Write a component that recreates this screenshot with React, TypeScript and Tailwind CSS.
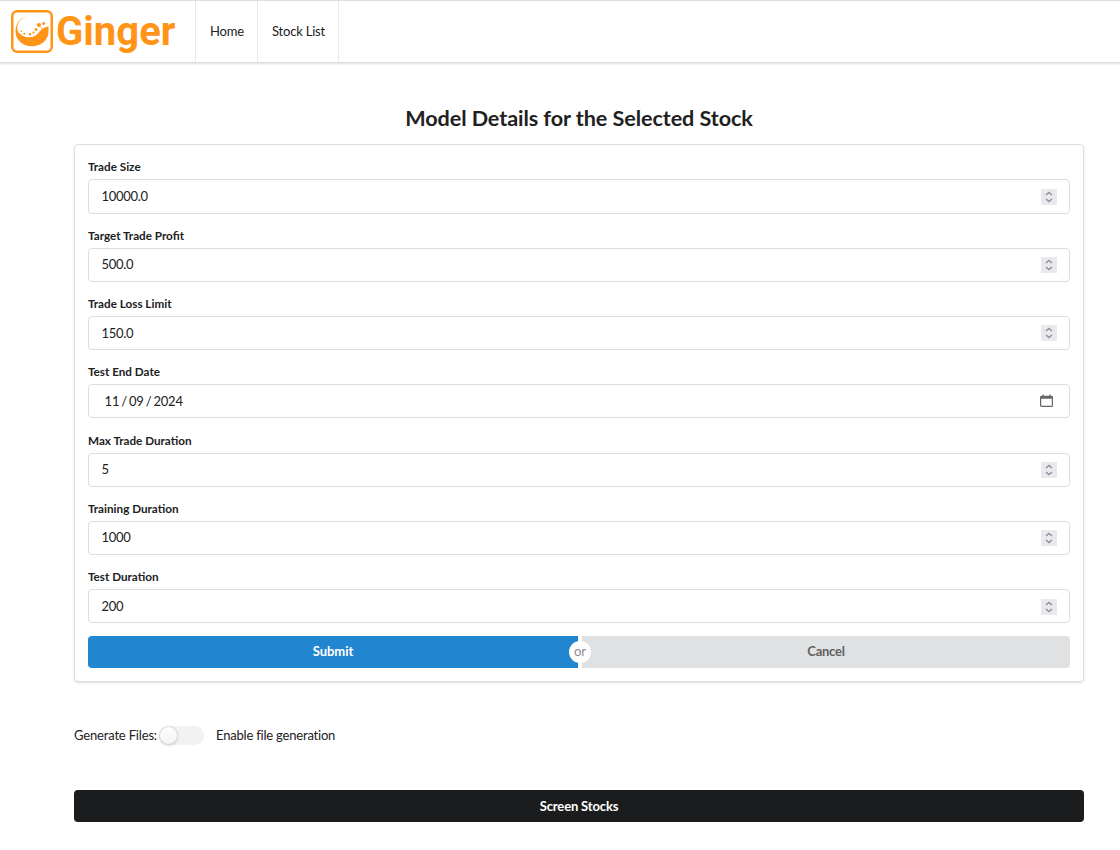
import React from 'react';

function Logo() {
  return (
    <div className="flex h-full w-[195px] items-center pl-[11px]">
      <svg width="42" height="43" viewBox="0 0 42 43" className="shrink-0">
        <rect x="1.25" y="1.25" width="39.5" height="40.5" rx="5" fill="none" stroke="#ff9416" strokeWidth="2.5" />
        <path d="M15.5 6C8.5 8 4.5 14.5 4.5 21C4.5 30 11.5 36.3 21 36.3C30.5 36.3 37.5 29.5 37.5 21.5V16.6C33 17 30.3 19.8 27.3 23C24.3 26.2 21.5 27.6 17.5 27.3C10.5 26.7 6 22.5 6.2 17.5C6.6 12.5 10 8.3 15.5 6Z" fill="#ff9416" />
        <g fill="#ff9416">
          <circle cx="10.3" cy="21.3" r="0.8" />
          <circle cx="13.4" cy="23.8" r="1" />
          <circle cx="19" cy="24.2" r="1.2" />
          <circle cx="22.5" cy="22.6" r="1.1" />
          <circle cx="25" cy="19.5" r="1.4" />
          <circle cx="28" cy="15" r="2.1" />
          <circle cx="32.6" cy="13.4" r="1.5" />
          <circle cx="30.6" cy="18" r="0.8" />
        </g>
      </svg>
      <span className="ml-[3px] font-[Roboto,sans-serif] text-[40px] leading-none font-bold text-[#ff9416]">Ginger</span>
    </div>
  );
}

function Spinner() {
  return (
    <span className="mt-[0.5px] flex h-4 w-4 items-center justify-center bg-[#e9e9ed]">
      <svg width="16" height="16" viewBox="0 0 16 16" fill="none" stroke="#8f8f9d" strokeWidth="1.5">
        <path d="M5 6L8 3.5L11 6M5 10L8 12.5L11 10" />
      </svg>
    </span>
  );
}

function CalendarIcon() {
  return (
    <svg width="14" height="14" viewBox="0 0 14 14" className="mr-[3px] mb-px">
      <rect x="0.6" y="2.4" width="11.8" height="10" rx="1" fill="none" stroke="#666" strokeWidth="1.2" />
      <path d="M0.5 2h12v2.7h-12zM2.5 0.5h1.3v2H2.5zM9.3 0.5h1.3v2H9.3z" fill="#666" />
    </svg>
  );
}

const fields = [
  { label: 'Trade Size', value: '10000.0' },
  { label: 'Target Trade Profit', value: '500.0' },
  { label: 'Trade Loss Limit', value: '150.0' },
  { label: 'Test End Date', value: '11 / 09 / 2024', date: true },
  { label: 'Max Trade Duration', value: '5' },
  { label: 'Training Duration', value: '1000' },
  { label: 'Test Duration', value: '200' },
];

export default function App() {
  return (
    <div className="h-[850px] w-[1120px] overflow-hidden bg-white font-[Lato,sans-serif] text-[13px] text-[#212122]">
      <header className="flex h-[63px] border-t border-b border-[#dcdddd] shadow-[0_1px_2px_0_rgba(34,36,38,0.15)]">
        <Logo />
        <nav className="flex">
          <a className="flex w-[63px] items-center justify-center border-x border-[#e8e9e9] pl-px tracking-[-0.15px]">Home</a>
          <a className="flex w-[81px] items-center justify-center border-r border-[#e8e9e9] pl-px tracking-[-0.2px]">Stock List</a>
        </nav>
      </header>

      <main className="ml-[74px] w-[1010px] pt-[41px]">
        <h1 className="h-[40px] text-center text-[21.6px] leading-[28px] font-bold tracking-[-0.07px]">Model Details for the Selected Stock</h1>
        <form className="h-[538px] rounded-[4px] border border-[#dcdddd] px-[13px] pt-[13.35px] shadow-[0_1px_2px_0_rgba(34,36,38,0.15)]">
          {fields.map((f) => (
            <div key={f.label} className="h-[68.32px]">
              <label className="block h-[21px] text-[11.7px] leading-[16px] font-bold">{f.label}</label>
              <div className="flex h-[34.18px] items-center justify-between rounded-[4px] border border-[#dcdddd] pr-3 pl-[12.6px]">
                <span className={f.date ? 'pl-[3px] pt-[0.5px] tracking-[-0.2px] [word-spacing:-1.1px]' : 'pt-[0.5px] tracking-[-0.3px]'}>{f.value}</span>
                {f.date ? <CalendarIcon /> : <Spinner />}
              </div>
            </div>
          ))}
          <div className="relative -mt-[0.5px] flex h-8 gap-1 font-bold tracking-[-0.05px]">
            <button type="button" className="w-[490px] rounded-l-[4px] bg-[#2185d0] pb-px text-white">Submit</button>
            <button type="button" className="flex-1 rounded-r-[4px] bg-[#e0e1e2] pb-px tracking-[-0.25px] text-[#5f6061]">Cancel</button>
            <span className="absolute top-[5px] left-[481px] flex h-[22px] w-[22px] items-center justify-center rounded-full bg-white pb-px text-[13px] font-normal text-[#8c8c8c]">or</span>
          </div>
        </form>

        <div className="mt-[42px] flex h-[22px] items-center pt-px">
          <span className="w-[85px] whitespace-nowrap tracking-[-0.17px]">Generate Files:</span>
          <span className="mb-px flex h-[19px] w-[45px] rounded-full bg-[#f2f2f2]">
            <span className="h-[19px] w-[19px] rounded-full bg-gradient-to-b from-white to-[#f3f3f3] shadow-[0_1px_2px_0_rgba(34,36,38,0.15),0_0_0_1px_rgba(34,36,38,0.15)_inset]" />
          </span>
          <span className="ml-3 tracking-[-0.2px]">Enable file generation</span>
        </div>
        <button type="button" className="mt-[44px] h-8 w-full rounded-[4px] bg-[#1b1c1d] pt-px font-bold tracking-[-0.15px] text-white">Screen Stocks</button>
      </main>
    </div>
  );
}
